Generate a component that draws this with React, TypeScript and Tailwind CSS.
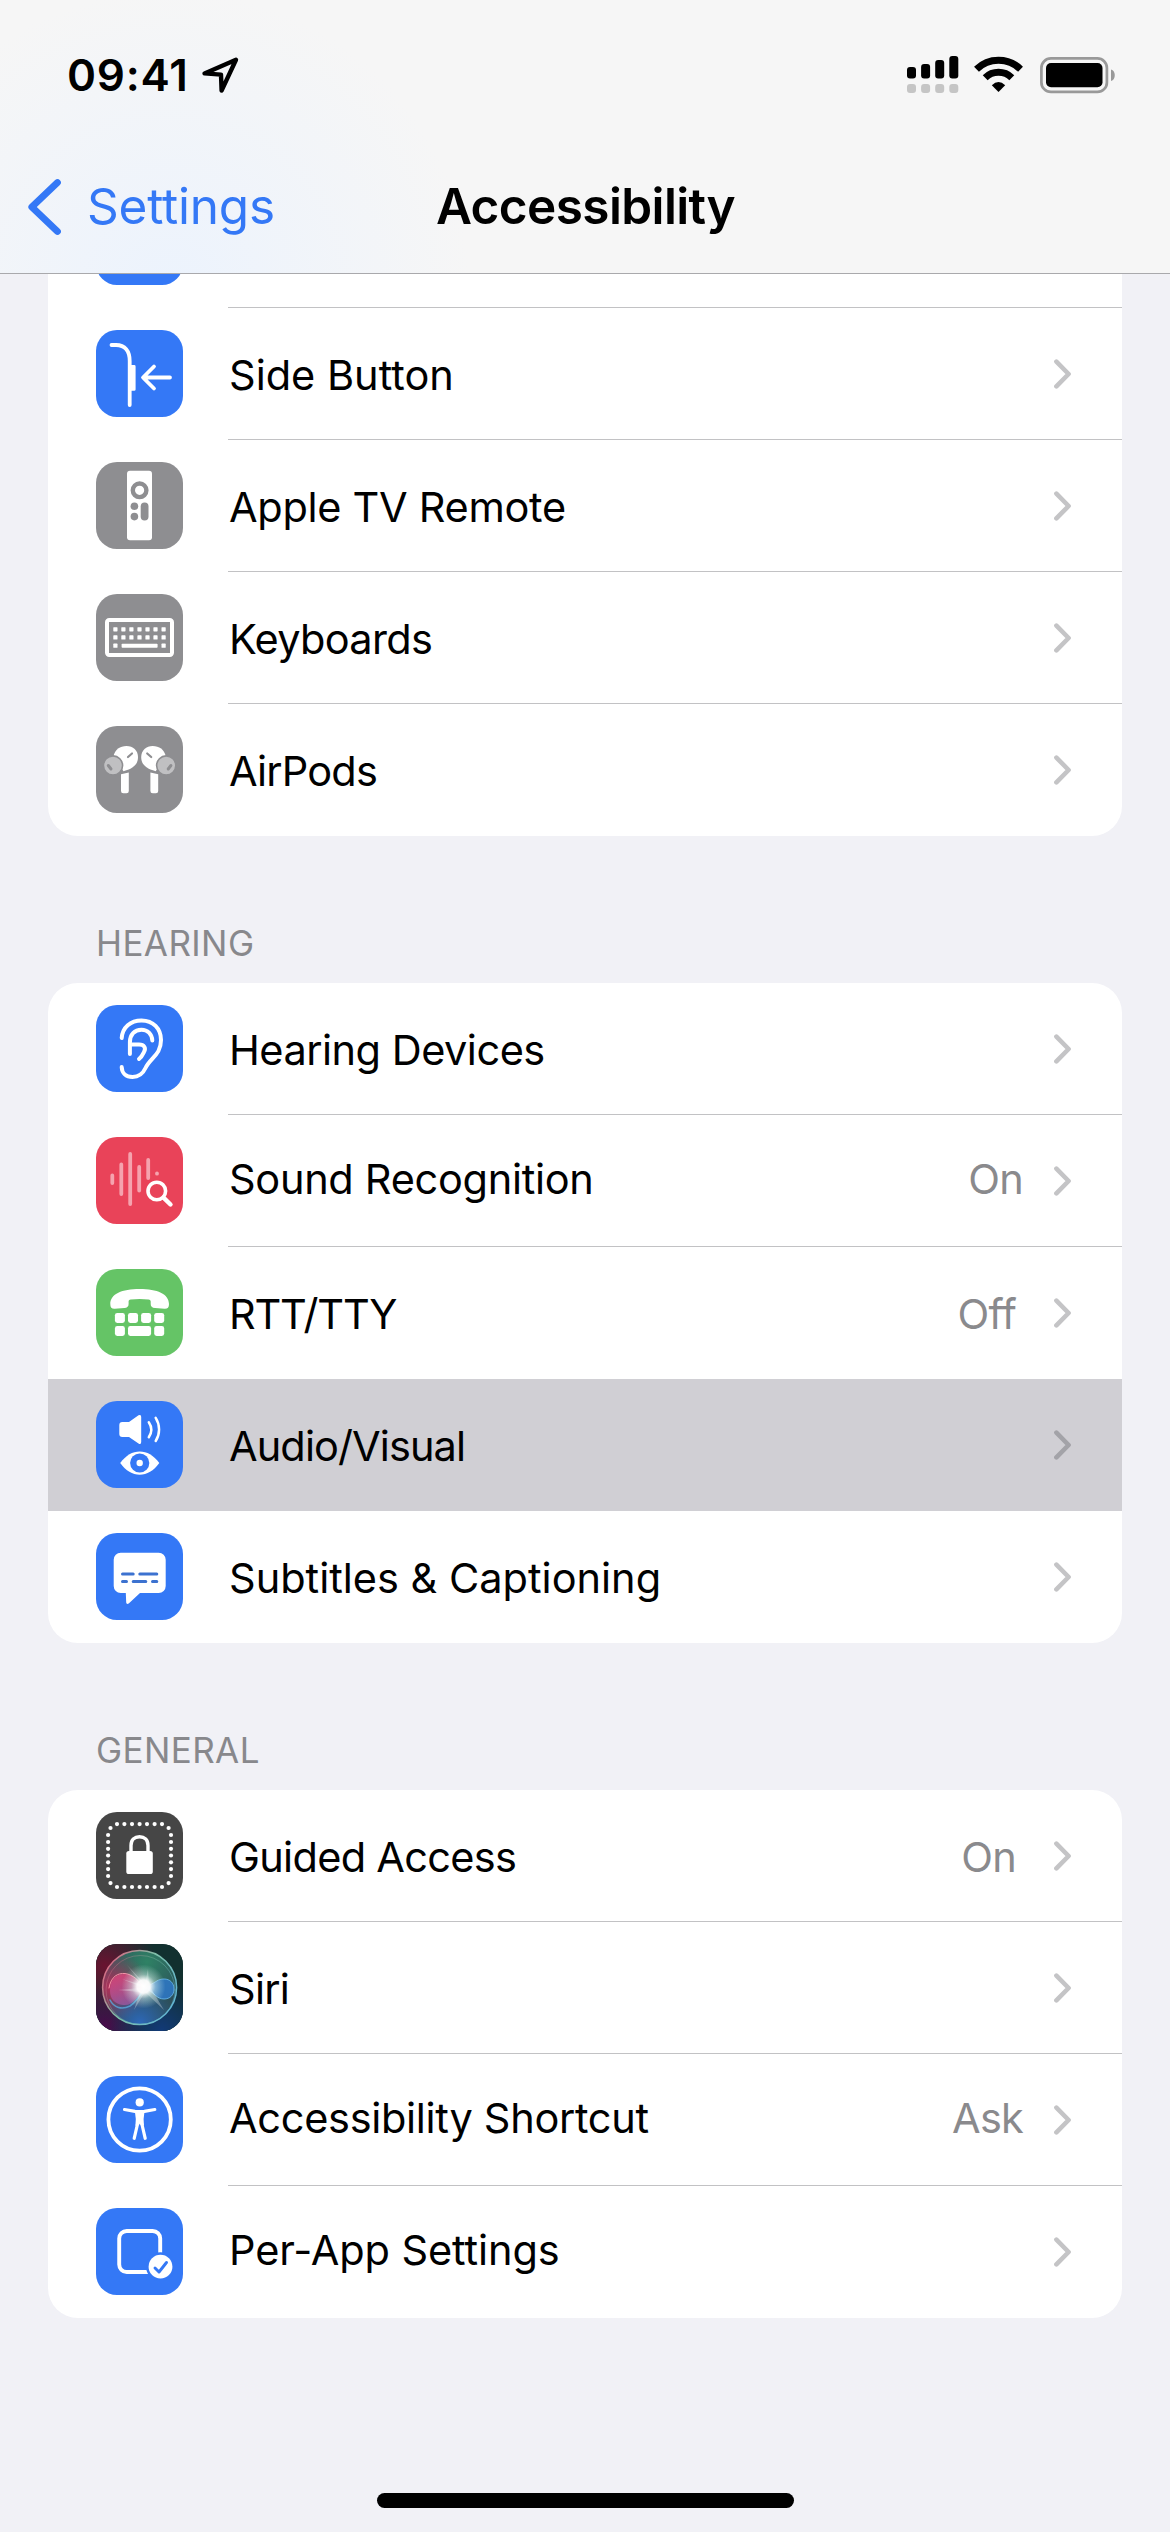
import type { ReactNode } from "react"

type RowProps = {
    icon: ReactNode
    color: string
    label: string
    tracking?: string
    value?: string
    raised?: boolean
    selected?: boolean
    noLine?: boolean
}

const BLUE = "bg-[#3478f6]"
const GRAY = "bg-[#8e8e91]"

function Tile({ color, children }: { color: string; children?: ReactNode }) {
    return (
        <div className={`size-[87px] shrink-0 overflow-hidden rounded-[21px] ${color}`}>
            <svg viewBox="0 0 87 87" className="size-full" fill="none" strokeLinecap="round" strokeLinejoin="round">
                {children}
            </svg>
        </div>
    )
}

function Row({ icon, color, label, tracking = "tracking-[-0.3px]", value, raised, selected, noLine }: RowProps) {
    return (
        <div className={`flex h-[132px] pl-12 ${selected ? "bg-[#d0cfd4]" : ""}`}>
            <div className="pt-[22px]">
                <Tile color={color}>{icon}</Tile>
            </div>
            <div className={`ml-[45px] flex flex-1 items-center border-b pr-[50px] ${noLine ? "border-transparent" : "border-[#c2c2c4]"}`}>
                <span className={`flex-1 whitespace-nowrap pl-px text-black ${tracking} ${raised ? "pb-[2px]" : "pt-[4px]"}`}>{label}</span>
                {value && (
                    <span className={`tracking-[-0.8px] text-[#8a8a8d] ${raised ? "mr-[29px] pb-[2px]" : "mr-[36px] pt-[4px]"}`}>{value}</span>
                )}
                <svg viewBox="0 0 20 30" className={`h-[30px] w-5 ${selected ? "text-[#a3a3a8]" : "text-[#c4c4c6]"}`} fill="none" stroke="currentColor" strokeWidth="4.6" strokeLinecap="round" strokeLinejoin="round">
                    <path d="M4.4 2.6 16.6 15 4.4 27.4" />
                </svg>
            </div>
        </div>
    )
}

function SideButtonIcon() {
    return (
        <g stroke="#fff" strokeWidth="3.8">
            <path d="M15.5 15H20C29 15 33.7 21 33.7 31V75" />
            <path d="M32 35h6.2a1.4 1.4 0 0 1 1.4 1.4v23a1.4 1.4 0 0 1-1.4 1.4H32z" fill="#fff" stroke="none" />
            <path d="M58 36.5 47 47.5l11 11M47.5 47.5H74" />
        </g>
    )
}

function RemoteIcon() {
    return (
        <>
            <rect x="31" y="8.7" width="25" height="69.5" rx="3" fill="#fff" />
            <circle cx="43.6" cy="28.3" r="6.8" stroke="#8e8e91" strokeWidth="4.4" />
            <circle cx="38.4" cy="44.2" r="3.8" fill="#8e8e91" />
            <circle cx="38.4" cy="54.6" r="3.8" fill="#8e8e91" />
            <rect x="44.7" y="40.6" width="7.8" height="17.8" rx="3.9" fill="#8e8e91" />
        </>
    )
}

function KeyboardIcon() {
    const cols = [19.4, 27.4, 35.4, 43.5, 51.5, 59.5, 67.6]
    return (
        <>
            <rect x="11" y="26" width="65" height="35" rx="2.2" stroke="#fff" strokeWidth="4" />
            {cols.map((x) => (
                <g key={x} fill="#fff">
                    <rect x={x - 2.1} y="33.2" width="4.2" height="4.2" rx="0.6" />
                    <rect x={x - 2.1} y="41.3" width="4.2" height="4.2" rx="0.6" />
                </g>
            ))}
            <rect x="17.3" y="49.6" width="4.2" height="4.2" rx="0.6" fill="#fff" />
            <rect x="65.5" y="49.6" width="4.2" height="4.2" rx="0.6" fill="#fff" />
            <rect x="25.6" y="49.7" width="36" height="4" rx="0.8" fill="#fff" />
        </>
    )
}

function Bud() {
    return (
        <>
            <path d="M17.5 30C19 23.5 24 20 30.5 20 37 20 42 24.5 42 31c0 6.5-3.5 11.2-14.5 14.2z" fill="#fff" />
            <path d="M32 31 36 27.5" stroke="#8e8e91" strokeWidth="2.2" />
            <circle cx="17" cy="39.5" r="9.6" fill="#c0c0c2" stroke="#8e8e91" strokeWidth="1.6" />
            <path d="M12.3 39.5 15 43" stroke="#8e8e91" strokeWidth="3" />
            <path d="M25 48.3 32.8 46.5V65a2.3 2.3 0 0 1-2.3 2.3h-3.2A2.3 2.3 0 0 1 25 65z" fill="#fff" />
        </>
    )
}

function AirPodsIcon() {
    return (
        <>
            <Bud />
            <g transform="translate(87.2 0) scale(-1 1)">
                <Bud />
            </g>
        </>
    )
}

function EarIcon() {
    return (
        <g stroke="#fff" strokeWidth="4">
            <path d="M25.7 33C26.5 22.5 34.5 15.5 45.5 15.5 57 15.5 65 23.5 65 35 65 50 54.5 52.5 49.5 63 46.5 69.5 42.5 72 36.5 72 30 72 25.9 68 25.7 62" />
            <path d="M56.3 35.5C56 29 51.5 24.7 45.5 24.7 38.5 24.7 33.9 29.5 33.9 37V49" />
            <path d="M33.9 39.6H43C48.5 39.6 50 43 48.2 46.5 46.5 50 46 51.5 43 54" />
        </g>
    )
}

function SoundIcon() {
    return (
        <>
            <path d="M16.3 38.5V46M25.3 27.5V57M34.2 17V67M43.2 30V53.5M52.2 23V41M61 36.5V36.7" stroke="#f5a3ae" strokeWidth="3.8" />
            <circle cx="60.8" cy="54" r="11.5" fill="#e94359" />
            <circle cx="60.8" cy="54" r="8.8" stroke="#fff" strokeWidth="3.6" />
            <path d="M67.5 60.7 74.5 67.5" stroke="#fff" strokeWidth="4.4" />
        </>
    )
}

function PhoneIcon() {
    return (
        <g fill="#fff">
            <path d="M14.3 35C14.3 25 26 20 43.6 20S73 25 73 35C73 38.5 71.5 40 68.5 39.8L59 39C56 38.8 54.7 37.5 54.7 35V32.5C54.7 31.2 54 30.6 52.5 30.4Q43.6 29.4 34.7 30.4C33.2 30.6 32.6 31.2 32.6 32.5V35C32.6 37.5 31.3 38.8 28.3 39L18.8 39.8C15.8 40 14.3 38.5 14.3 35Z" />
            <rect x="18.9" y="43.9" width="10" height="10" rx="2.4" />
            <rect x="32" y="43.9" width="10" height="10" rx="2.4" />
            <rect x="45.1" y="43.9" width="10" height="10" rx="2.4" />
            <rect x="58.2" y="43.9" width="10" height="10" rx="2.4" />
            <rect x="18.9" y="57" width="10" height="10" rx="2.4" />
            <rect x="32" y="57" width="23.1" height="10" rx="2.4" />
            <rect x="58.2" y="57" width="10" height="10" rx="2.4" />
        </g>
    )
}

function AudioVisualIcon() {
    return (
        <>
            <path d="M23.3 24Q23.3 21 26.3 21H33L42.5 14.3Q45.2 13 45.2 16V41Q45.2 44 42.5 42.5L33 36H26.3Q23.3 36 23.3 33z" fill="#fff" />
            <path d="M52.8 21.3C56 26 56 31.5 52.8 36.3M59.7 16.8C64.2 24 64.2 33 59.7 40" stroke="#fff" strokeWidth="2.5" />
            <path d="M24.2 62C30 54 36.5 50.4 43.7 50.4S57.5 54 63.3 62C57.5 70 51 73.7 43.7 73.7S30 70 24.2 62z" fill="#fff" />
            <circle cx="43.7" cy="62" r="9.6" fill="#3478f6" />
            <circle cx="43.7" cy="62" r="3.2" fill="#fff" />
        </>
    )
}

function SubtitlesIcon() {
    return (
        <>
            <path d="M24.7 19.7H62.7a7 7 0 0 1 7 7V53a7 7 0 0 1-7 7H44L33 70.3C31.5 71.6 30.3 71 30.2 69.3L29.8 60H24.7a7 7 0 0 1-7-7V26.7a7 7 0 0 1 7-7z" fill="#fff" />
            <path d="M26.5 41H37.2M43.8 41H60.8M26.5 48.4H30.5M37.2 48.4H49.8M56.5 48.4H60.8" stroke="#3c72d0" strokeWidth="3" />
        </>
    )
}

function GuidedIcon() {
    const across = [21, 28.4, 36, 43.6, 51, 58.6, 66]
    const down = [23, 30, 36.8, 43.5, 50.3, 57.1, 64]
    return (
        <g fill="#fff">
            {across.map((x) => (
                <g key={x}>
                    <circle cx={x} cy="12.1" r="2.1" />
                    <circle cx={x} cy="75" r="2.1" />
                </g>
            ))}
            {down.map((y) => (
                <g key={y}>
                    <circle cx="12.1" cy={y} r="2.1" />
                    <circle cx="75" cy={y} r="2.1" />
                </g>
            ))}
            <circle cx="14.5" cy="16" r="2.1" />
            <circle cx="72.6" cy="16" r="2.1" />
            <circle cx="14.5" cy="71.1" r="2.1" />
            <circle cx="72.6" cy="71.1" r="2.1" />
            <rect x="30.3" y="39" width="26.5" height="23" rx="2.6" />
            <path d="M35 41V33.5C35 28 38.5 24.7 43.5 24.7S52 28 52 33.5V41" stroke="#fff" strokeWidth="3.4" fill="none" />
        </g>
    )
}

function SiriIcon() {
    return (
        <>
            <defs>
                <radialGradient id="redGlow" cx="0.1" cy="0.25" r="0.6">
                    <stop offset="0" stopColor="#6a1330" />
                    <stop offset="1" stopColor="#6a1330" stopOpacity="0" />
                </radialGradient>
                <radialGradient id="purpleGlow" cx="0.1" cy="0.95" r="0.5">
                    <stop offset="0" stopColor="#4a0b4c" />
                    <stop offset="1" stopColor="#4a0b4c" stopOpacity="0" />
                </radialGradient>
                <radialGradient id="blueGlow" cx="0.75" cy="1" r="0.6">
                    <stop offset="0" stopColor="#123a78" />
                    <stop offset="1" stopColor="#123a78" stopOpacity="0" />
                </radialGradient>
                <radialGradient id="orbGreen" cx="0.6" cy="0.15" r="0.6">
                    <stop offset="0" stopColor="#2f8265" />
                    <stop offset="1" stopColor="#2f8265" stopOpacity="0" />
                </radialGradient>
                <radialGradient id="orbRed" cx="0.12" cy="0.5" r="0.5">
                    <stop offset="0" stopColor="#b5305a" />
                    <stop offset="1" stopColor="#b5305a" stopOpacity="0" />
                </radialGradient>
                <radialGradient id="orbBlue" cx="0.5" cy="0.98" r="0.5">
                    <stop offset="0" stopColor="#2d68b8" />
                    <stop offset="1" stopColor="#2d68b8" stopOpacity="0" />
                </radialGradient>
                <linearGradient id="orbRing" x1="0" y1="0.2" x2="1" y2="0.8">
                    <stop offset="0" stopColor="#e0607f" />
                    <stop offset="0.45" stopColor="#7fc0a8" />
                    <stop offset="1" stopColor="#5fb4d8" />
                </linearGradient>
                <linearGradient id="pinkLobe" x1="0.4" y1="0" x2="0.6" y2="1">
                    <stop offset="0" stopColor="#d9467a" />
                    <stop offset="1" stopColor="#94589f" />
                </linearGradient>
                <radialGradient id="flare">
                    <stop offset="0" stopColor="#fff" />
                    <stop offset="0.3" stopColor="#fff" stopOpacity="0.95" />
                    <stop offset="0.55" stopColor="#e2fbf4" stopOpacity="0.45" />
                    <stop offset="1" stopColor="#cfeee6" stopOpacity="0" />
                </radialGradient>
            </defs>
            <rect width="87" height="87" fill="#12302f" />
            <rect width="87" height="87" fill="url(#redGlow)" />
            <rect width="87" height="87" fill="url(#purpleGlow)" />
            <rect width="87" height="87" fill="url(#blueGlow)" />
            <circle cx="43.6" cy="43.5" r="37" fill="#2c4f5a" />
            <circle cx="43.6" cy="43.5" r="37" fill="url(#orbGreen)" />
            <circle cx="43.6" cy="43.5" r="37" fill="url(#orbRed)" />
            <circle cx="43.6" cy="43.5" r="37" fill="url(#orbBlue)" />
            <circle cx="43.6" cy="43.5" r="37" stroke="url(#orbRing)" strokeWidth="1.5" />
            <circle cx="44.5" cy="46" r="34.5" stroke="url(#orbRing)" strokeWidth="0.8" opacity="0.5" />
            <path d="M14 47C14 35 20 30 28 30 37 30 42 36 48 43 42 52 38 62 27 61 19 60 14 55 14 47z" fill="url(#pinkLobe)" opacity="0.85" />
            <path d="M14 56C18 64 26 66 34 62 40 58 44 52 48 45" stroke="#58a9dc" strokeWidth="1.6" opacity="0.8" />
            <path d="M13 44C15 32 22 29 29 29.5 37 30.5 43 37 48 43" stroke="#ff9aae" strokeWidth="1" opacity="0.9" />
            <path d="M48 44C56 42 60 35 68 35 74 35 78 39 78 45S74 55 68 55C60 55 56 47 48 44z" fill="#2f78c8" opacity="0.85" />
            <path d="M54 41C60 38 62 35 68 35 74 35 78 39 78 45S74 55 68 55C61 55 58 49 53 46" stroke="#6bbcf0" strokeWidth="1" opacity="0.8" />
            <path d="M48 44 26 35 47 41 31 21 49 40 52 25 53 41 68 66 49 48 38 66 44 48 22 46 44 44z" fill="#fff" opacity="0.3" />
            <circle cx="47.5" cy="42.5" r="22" fill="url(#flare)" />
        </>
    )
}

function ShortcutIcon() {
    return (
        <>
            <circle cx="43.6" cy="43.5" r="31.2" stroke="#fff" strokeWidth="3.8" />
            <circle cx="43.7" cy="26.4" r="4.1" fill="#fff" />
            <path d="M28.5 33.5 39 35.3Q43.7 35.8 48.4 35.3L58.8 33.5M38.2 62.3 41.3 49 43.7 43.5 46.1 49 49.2 62.3" stroke="#fff" strokeWidth="3.2" />
            <path d="M38.8 34.8H48.6L47.6 43 48 50 43.7 46 39.4 50 39.8 43z" fill="#fff" />
        </>
    )
}

function PerAppIcon() {
    return (
        <>
            <rect x="23.2" y="23" width="41" height="41" rx="7.5" stroke="#fff" strokeWidth="3.9" />
            <circle cx="64.5" cy="58.7" r="14.4" fill="#3478f6" />
            <circle cx="64.5" cy="58.7" r="11.9" fill="#fff" />
            <path d="M59 60 63 64 70.5 54.5" stroke="#3478f6" strokeWidth="2.9" />
        </>
    )
}

function StatusBar() {
    return (
        <div className="flex h-[150px] items-center pl-[67px] pr-[54px]">
            <span className="text-[44px] font-semibold leading-none tracking-[0.8px]">09:41</span>
            <svg viewBox="0 0 38 38" className="ml-[12px] size-[38px]" fill="none" stroke="#000" strokeWidth="4.4" strokeLinejoin="round">
                <path d="M35 3.8 3.5 17.4 20 18.6 20.6 34.6z" />
            </svg>
            <div className="flex-1" />
            <svg viewBox="0 0 52 38" className="h-[38px] w-[52px]">
                <rect x="0" y="11" width="9" height="11.5" rx="3" />
                <rect x="14.1" y="8" width="9" height="14.5" rx="3" />
                <rect x="28.2" y="4" width="9" height="18.5" rx="3" />
                <rect x="42.3" y="0" width="9" height="22.5" rx="3" />
                <g fill="#c5c5c5">
                    <rect x="0" y="28" width="9" height="9" rx="3" />
                    <rect x="14.1" y="28" width="9" height="9" rx="3" />
                    <rect x="28.2" y="28" width="9" height="9" rx="3" />
                    <rect x="42.3" y="28" width="9" height="9" rx="3" />
                </g>
            </svg>
            <svg viewBox="0 0 49 38" className="ml-[15px] h-[38px] w-[49px]" fill="none" stroke="#000" strokeWidth="7">
                <path d="M2.5 13.2a31.5 31.5 0 0 1 44 0" />
                <path d="M11.2 21.8a19 19 0 0 1 26.6 0" />
                <path d="M24.5 36 17.8 29.3Q24.5 22.5 31.2 29.3z" fill="#000" stroke="none" />
            </svg>
            <svg viewBox="0 0 76 38" className="ml-[17px] h-[38px] w-[76px]">
                <rect x="1.4" y="2.4" width="65.5" height="33.5" rx="9.5" fill="none" stroke="#999" strokeWidth="2.7" />
                <rect x="6" y="7" width="56.5" height="24.3" rx="5" />
                <path d="M71 13.5c5 1 5 10.5 0 11.5z" fill="#999" />
            </svg>
        </div>
    )
}

export default function App() {
    return (
        <div className="flex h-[2532px] w-[1170px] flex-col overflow-hidden bg-[#f1f1f6] font-['Inter',sans-serif] text-[41.5px] leading-none">
            <header className="z-10 h-[274px] shrink-0 border-b border-[#a9a9ac] bg-[#f6f6f6] bg-[radial-gradient(circle_at_170px_290px,#ecf3fd_0,#f6f6f6_300px)]">
                <StatusBar />
                <div className="grid h-[114px] grid-cols-3 items-center text-[49.5px]">
                    <div className="flex items-center gap-[25px] pl-[27px] text-[#3478f6]">
                        <svg viewBox="0 0 35 58" className="h-[58px] w-[35px]" fill="none" stroke="currentColor" strokeWidth="6.8" strokeLinecap="round" strokeLinejoin="round">
                            <path d="M30.5 4.5 4.8 29 30.5 53.5" />
                        </svg>
                        <span className="tracking-[-0.2px]">Settings</span>
                    </div>
                    <h1 className="pl-px text-center font-semibold tracking-[-0.6px]">Accessibility</h1>
                </div>
            </header>

            <main className="px-12">
                <section className="-mt-[98px] overflow-hidden rounded-[30px] bg-white">
                    <Row color={BLUE} icon={null} label="" />
                    <Row color={BLUE} icon={<SideButtonIcon />} label="Side Button" tracking="tracking-[0px]" />
                    <Row color={GRAY} icon={<RemoteIcon />} label="Apple TV Remote" />
                    <Row color={GRAY} icon={<KeyboardIcon />} label="Keyboards" tracking="tracking-[-0.7px]" />
                    <Row color={GRAY} icon={<AirPodsIcon />} label="AirPods" tracking="tracking-[-0.8px]" noLine />
                </section>

                <h2 className="flex h-[147px] items-end pb-[22px] pl-12 text-[35px] tracking-[0.4px] text-[#88888c]">HEARING</h2>
                <section className="overflow-hidden rounded-[30px] bg-white">
                    <Row color={BLUE} icon={<EarIcon />} label="Hearing Devices" tracking="tracking-[-0.5px]" />
                    <Row color="bg-[#e94359]" icon={<SoundIcon />} label="Sound Recognition" value="On" raised />
                    <Row color="bg-[#65c466]" icon={<PhoneIcon />} label="RTT/TTY" tracking="tracking-[-1.2px]" value="Off" noLine />
                    <Row color={BLUE} icon={<AudioVisualIcon />} label="Audio/Visual" tracking="tracking-[-0.9px]" selected noLine />
                    <Row color={BLUE} icon={<SubtitlesIcon />} label="Subtitles & Captioning" tracking="tracking-[0px]" noLine />
                </section>

                <h2 className="flex h-[147px] items-end pb-[22px] pl-12 text-[35px] tracking-[0.4px] text-[#88888c]">GENERAL</h2>
                <section className="overflow-hidden rounded-[30px] bg-white">
                    <Row color="bg-[#464646]" icon={<GuidedIcon />} label="Guided Access" tracking="tracking-[-0.7px]" value="On" />
                    <Row color="bg-[#12302f]" icon={<SiriIcon />} label="Siri" tracking="tracking-[-0.7px]" />
                    <Row color={BLUE} icon={<ShortcutIcon />} label="Accessibility Shortcut" value="Ask" raised />
                    <Row color={BLUE} icon={<PerAppIcon />} label="Per-App Settings" tracking="tracking-[-0.1px]" raised noLine />
                </section>
            </main>

            <div className="mx-auto mt-auto mb-6 h-[15px] w-[417px] rounded-full bg-black" />
        </div>
    )
}
